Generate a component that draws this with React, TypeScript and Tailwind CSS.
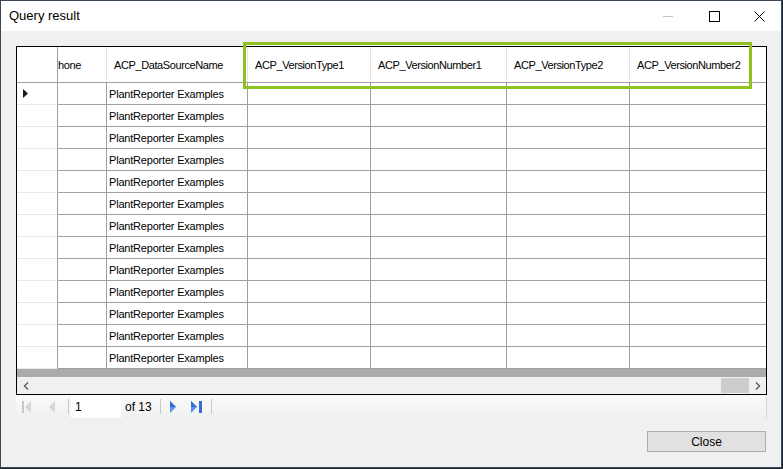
import React from "react";

const cols = [
  { w: "w-[49px]", label: "hone", pl: "pl-0" },
  { w: "w-[141px]", label: "ACP_DataSourceName", pl: "pl-[7px]" },
  { w: "w-[123px]", label: "ACP_VersionType1", pl: "pl-[7px]" },
  { w: "w-[136px]", label: "ACP_VersionNumber1", pl: "pl-[7px]" },
  { w: "w-[123px]", label: "ACP_VersionType2", pl: "pl-[7px]" },
];

const gridFont = { fontFamily: '"Liberation Sans", Arial, sans-serif' };

function NavIcon({ kind, on }: { kind: "first" | "prev" | "next" | "last"; on: boolean }) {
  const fill = on ? "#2f6fd8" : "#c8c8c8";
  const fill2 = on ? "#5a94ee" : "#d8d8d8";
  if (kind === "first")
    return (
      <svg width="10" height="12" viewBox="0 0 10 12">
        <rect x="0" y="0" width="2" height="12" fill={fill} />
        <polygon points="9,0 3,6 9,12" fill={fill2} />
      </svg>
    );
  if (kind === "prev")
    return (
      <svg width="7" height="12" viewBox="0 0 7 12">
        <polygon points="6,0 0,6 6,12" fill={fill2} />
      </svg>
    );
  if (kind === "next")
    return (
      <svg width="7" height="12" viewBox="0 0 7 12">
        <polygon points="0,0 6,6 0,12" fill={fill2} />
        <polygon points="0,0 6,6 0,6" fill={fill} />
      </svg>
    );
  return (
    <svg width="12" height="12" viewBox="0 0 12 12">
      <polygon points="0,0 6,6 0,12" fill={fill2} />
      <polygon points="0,0 6,6 0,6" fill={fill} />
      <rect x="8" y="0" width="3" height="12" fill={fill} />
    </svg>
  );
}

export default function App() {
  const rows = Array.from({ length: 13 }, (_, i) => i);
  return (
    <div className="w-[783px] h-[469px] bg-[#1f2a36] overflow-hidden">
      <div className="relative w-[782px] h-[468px] border border-[#3a4654] bg-[#f0f0f0] flex flex-col">
        {/* title bar */}
        <div className="h-[30px] bg-white flex items-center shrink-0">
          <div
            className="pl-[8px] text-[13px] text-black flex-1"
            style={{ fontFamily: '"Liberation Sans", Arial, sans-serif' }}
          >
            Query result
          </div>
          <div className="w-[46px] h-[30px] flex items-center justify-center">
            <div className="w-[10px] h-[1px] bg-[#c4c4c4] mt-[1px]" />
          </div>
          <div className="w-[46px] h-[30px] flex items-center justify-center">
            <div className="w-[11px] h-[11px] border border-black" />
          </div>
          <div className="w-[44px] h-[30px] flex items-center justify-center">
            <svg width="11" height="11" viewBox="0 0 11 11">
              <path d="M0.5 0.5 L10.5 10.5 M10.5 0.5 L0.5 10.5" stroke="#000" strokeWidth="1" />
            </svg>
          </div>
        </div>

        {/* grid */}
        <div
          className="ml-[15px] mt-[15px] w-[751px] h-[349px] border border-black bg-[#ababab] flex flex-col overflow-hidden"
          style={gridFont}
        >
          {/* header */}
          <div className="flex h-[36px] bg-white border-b border-[#a0a0a0] shrink-0 text-[11px] tracking-[-0.4px] text-black">
            <div className="w-[41px] border-r border-[#a0a0a0] shrink-0" />
            {cols.map((c) => (
              <div
                key={c.label}
                className={`${c.w} ${c.pl} shrink-0 border-r border-[#e3e3e3] flex items-center pt-[1px] whitespace-nowrap overflow-hidden`}
              >
                {c.label}
              </div>
            ))}
            <div className="flex-1 pl-[7px] flex items-center pt-[1px] whitespace-nowrap overflow-hidden">
              ACP_VersionNumber2
            </div>
          </div>
          {/* rows */}
          {rows.map((i) => (
            <div key={i} className="flex h-[22px] shrink-0 bg-white text-[11px] tracking-[-0.2px] text-black">
              <div className="w-[41px] shrink-0 border-r border-[#a0a0a0] border-b border-b-[#e8e8e8] flex items-center pl-[6px]">
                {i === 0 && (
                  <svg width="5" height="9" viewBox="0 0 5 9">
                    <polygon points="0,0 5,4.5 0,9" fill="#1a1a1a" />
                  </svg>
                )}
              </div>
              <div className="w-[49px] shrink-0 border-r border-b border-[#a0a0a0]" />
              <div className="w-[141px] shrink-0 border-r border-b border-[#a0a0a0] flex items-center pt-[1px] pl-[2px] whitespace-nowrap">
                PlantReporter Examples
              </div>
              <div className="w-[123px] shrink-0 border-r border-b border-[#a0a0a0]" />
              <div className="w-[136px] shrink-0 border-r border-b border-[#a0a0a0]" />
              <div className="w-[123px] shrink-0 border-r border-b border-[#a0a0a0]" />
              <div className="flex-1 border-b border-[#a0a0a0]" />
            </div>
          ))}
          <div className="flex-1" />
          {/* horizontal scrollbar */}
          <div className="h-[17px] bg-[#f0f0f0] flex items-center shrink-0">
            <div className="w-[17px] h-[17px] flex items-center justify-center">
              <svg width="6" height="8" viewBox="0 0 6 8">
                <path d="M5 0.5 L1.5 4 L5 7.5" stroke="#606060" strokeWidth="1.5" fill="none" />
              </svg>
            </div>
            <div className="flex-1 h-[17px] flex items-center justify-end">
              <div className="w-[28px] h-[15px] bg-[#cdcdcd]" />
            </div>
            <div className="w-[17px] h-[17px] flex items-center justify-center">
              <svg width="6" height="8" viewBox="0 0 6 8">
                <path d="M1 0.5 L4.5 4 L1 7.5" stroke="#606060" strokeWidth="1.5" fill="none" />
              </svg>
            </div>
          </div>
        </div>

        {/* navigator */}
        <div
          className="ml-[15px] w-[751px] h-[23px] bg-gradient-to-b from-[#fafafa] to-[#f0f0f0] border-r border-[#d8d8d8] flex items-center text-[12px] text-black shrink-0"
          style={gridFont}
        >
          <div className="w-[6px]" />
          <NavIcon kind="first" on={false} />
          <div className="w-[17px]" />
          <NavIcon kind="prev" on={false} />
          <div className="w-[12px]" />
          <div className="w-[1px] h-[15px] bg-[#c8c8c8]" />
          <div className="w-[2px]" />
          <div className="w-[50px] h-[23px] bg-white flex items-center pl-[4px]">1</div>
          <div className="pl-[4px] pr-[8px]">of 13</div>
          <div className="w-[1px] h-[15px] bg-[#c8c8c8]" />
          <div className="w-[9px]" />
          <NavIcon kind="next" on={true} />
          <div className="w-[14px]" />
          <NavIcon kind="last" on={true} />
          <div className="w-[8px]" />
          <div className="w-[1px] h-[15px] bg-[#c8c8c8]" />
        </div>

        {/* close button */}
        <div className="flex justify-end pr-[15px] mt-[13px]">
          <div
            className="w-[119px] h-[21px] bg-[#e1e1e1] border border-[#adadad] flex items-center justify-center text-[12px] text-black"
            style={gridFont}
          >
            Close
          </div>
        </div>

        {/* highlight */}
        <div className="absolute left-[242px] top-[41px] w-[509px] h-[47px] border-[3px] border-[#8fc21f]" />
      </div>
    </div>
  );
}
